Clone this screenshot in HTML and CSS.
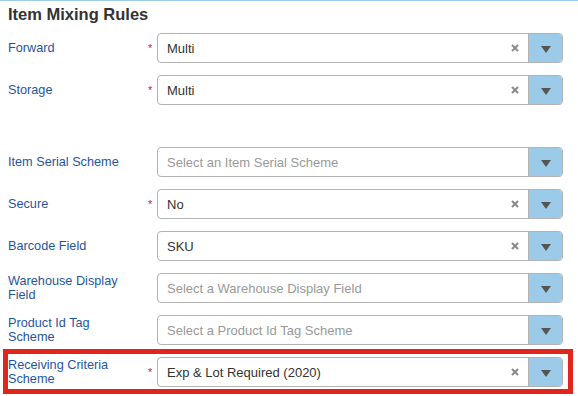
FILE: index.html
```html
<!DOCTYPE html>
<html lang="en">
<head>
    <meta charset="UTF-8">
    <meta name="viewport" content="width=device-width, initial-scale=1.0">
    <title>Item Mixing Rules</title>
    <link rel="stylesheet" href="styles.css">
</head>
<body>
    <div class="panel">
        <h3 class="panel-title">Item Mixing Rules</h3>

        <div class="form">
            <div class="form-row">
                <label class="field-label">Forward</label>
                <span class="required">*</span>
                <div class="select">
                    <span class="select-value">Multi</span>
                    <span class="select-clear"><svg width="8" height="8" viewBox="0 0 8 8"><path d="M1 1L7 7M7 1L1 7" stroke="#8a8a8a" stroke-width="2"/></svg></span>
                    <span class="select-arrow"><span class="triangle"></span></span>
                </div>
            </div>

            <div class="form-row">
                <label class="field-label">Storage</label>
                <span class="required">*</span>
                <div class="select">
                    <span class="select-value">Multi</span>
                    <span class="select-clear"><svg width="8" height="8" viewBox="0 0 8 8"><path d="M1 1L7 7M7 1L1 7" stroke="#8a8a8a" stroke-width="2"/></svg></span>
                    <span class="select-arrow"><span class="triangle"></span></span>
                </div>
            </div>

            <div class="form-spacer"></div>

            <div class="form-row">
                <label class="field-label">Item Serial Scheme</label>
                <span class="required"></span>
                <div class="select">
                    <span class="select-value placeholder">Select an Item Serial Scheme</span>
                    <span class="select-arrow"><span class="triangle"></span></span>
                </div>
            </div>

            <div class="form-row">
                <label class="field-label">Secure</label>
                <span class="required">*</span>
                <div class="select">
                    <span class="select-value">No</span>
                    <span class="select-clear"><svg width="8" height="8" viewBox="0 0 8 8"><path d="M1 1L7 7M7 1L1 7" stroke="#8a8a8a" stroke-width="2"/></svg></span>
                    <span class="select-arrow"><span class="triangle"></span></span>
                </div>
            </div>

            <div class="form-row">
                <label class="field-label">Barcode Field</label>
                <span class="required"></span>
                <div class="select">
                    <span class="select-value">SKU</span>
                    <span class="select-clear"><svg width="8" height="8" viewBox="0 0 8 8"><path d="M1 1L7 7M7 1L1 7" stroke="#8a8a8a" stroke-width="2"/></svg></span>
                    <span class="select-arrow"><span class="triangle"></span></span>
                </div>
            </div>

            <div class="form-row">
                <label class="field-label">Warehouse Display Field</label>
                <span class="required"></span>
                <div class="select">
                    <span class="select-value placeholder">Select a Warehouse Display Field</span>
                    <span class="select-arrow"><span class="triangle"></span></span>
                </div>
            </div>

            <div class="form-row">
                <label class="field-label">Product Id Tag Scheme</label>
                <span class="required"></span>
                <div class="select">
                    <span class="select-value placeholder">Select a Product Id Tag Scheme</span>
                    <span class="select-arrow"><span class="triangle"></span></span>
                </div>
            </div>

            <div class="form-row highlight">
                <label class="field-label">Receiving Criteria Scheme</label>
                <span class="required">*</span>
                <div class="select">
                    <span class="select-value">Exp &amp; Lot Required (2020)</span>
                    <span class="select-clear"><svg width="8" height="8" viewBox="0 0 8 8"><path d="M1 1L7 7M7 1L1 7" stroke="#8a8a8a" stroke-width="2"/></svg></span>
                    <span class="select-arrow"><span class="triangle"></span></span>
                </div>
            </div>
        </div>
    </div>
</body>
</html>
```

FILE: styles.css
```css
body {
    margin: 0;
    padding: 0;
    background-color: white;
    font-family: "Liberation Sans", Arial, sans-serif;
    color: #333;
}

.panel {
    border-top: 1px solid #9fcbe9;
}

.panel-title {
    margin: 0;
    padding: 4px 8px 0 8px;
    height: 22px;
    font-size: 16.5px;
    font-weight: bold;
    color: #333;
}

.form {
    padding: 0 15px 0 8px;
}

.form-row {
    display: flex;
    align-items: center;
    padding: 6px 0;
}

.form-spacer {
    height: 30px;
}

.field-label {
    width: 126px;
    margin-right: 14px;
    font-size: 12.7px;
    line-height: 14px;
    color: #1f559f;
}

.required {
    width: 9px;
    color: #e02020;
    font-size: 11px;
    line-height: 11px;
}

.select {
    flex: 1;
    display: flex;
    align-items: center;
    height: 28px;
    border: 1px solid #b3b3b3;
    border-radius: 4px;
    background-color: white;
    overflow: hidden;
}

.select-value {
    flex: 1;
    padding-left: 9px;
    font-size: 13px;
    color: #333;
}

.select-value.placeholder {
    color: #999;
}

.select-clear {
    display: flex;
    margin-right: 9px;
}

.select-arrow {
    display: flex;
    align-items: center;
    justify-content: center;
    width: 33px;
    height: 100%;
    background-color: #9ccbe9;
    border-left: 1px solid #b3b3b3;
}

.triangle {
    width: 0;
    height: 0;
    border-left: 5px solid transparent;
    border-right: 5px solid transparent;
    border-top: 7px solid #555;
    margin-top: 2px;
}

.highlight {
    margin: -2px -10px 0 -5px;
    padding: 3px 5px 2px 0;
    border: 5px solid #e0261c;
}
```
